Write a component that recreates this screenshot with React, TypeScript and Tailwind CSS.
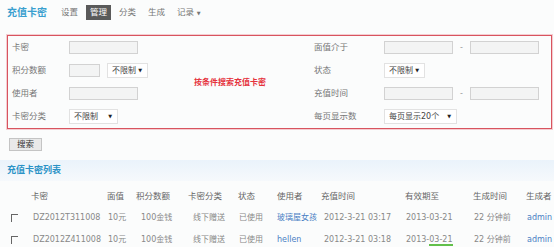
const font = 'font-["DejaVu_Sans","Noto_Sans_CJK_SC",sans-serif]';

const Input = ({ w = 'w-[69px]' }: { w?: string }) => (
  <div className={`${w} h-[13px] border border-[#d2d2d2] bg-[#f3f4f4]`} />
);

const Select = ({ label, w }: { label: string; w: string }) => (
  <div className={`${w} flex h-[15px] items-center justify-between whitespace-nowrap border border-[#e2e2e2] bg-white pl-[4px] pr-[5px] text-[8px] text-[#444]`}>
    <span>{label}</span>
    <span className="text-[5px] text-[#222]">▼</span>
  </div>
);

const Row = ({ label, lw, children }: { label: string; lw: string; children?: React.ReactNode }) => (
  <div className="flex h-[23px] items-center">
    <span className={`${lw} shrink-0 text-[8.5px] text-[#777]`}>{label}</span>
    {children}
  </div>
);

const Check = () => (
  <div className="h-[8px] w-[7px] border-t-[1.5px] border-l-[1.5px] border-[#666]" />
);

const cols =
  'grid grid-cols-[22px_76px_29px_52px_50px_39px_44px_84px_68px_53px_1fr] items-center pl-[9px] h-[22px] whitespace-nowrap';

const rows = [
  {
    code: 'DZ2012T311008',
    user: '玻璃屋女孩',
    time: '2012-3-21 03:17',
    exp: <span>2013-03-21</span>,
  },
  {
    code: 'DZ2012Z411008',
    user: 'hellen',
    time: '2012-3-21 03:18',
    exp: (
      <span>
        2013-<span className="border-b-2 border-[#62c04a]">03-21</span>
      </span>
    ),
  },
];

export default function App() {
  return (
    <div className={`h-[247px] w-[554px] overflow-hidden bg-[#fbfcfc] ${font}`}>
      {/* top nav */}
      <div className="flex h-[24px] items-center pl-[7px] pt-[1px]">
        <span className="text-[10px] font-bold text-[#3a9fcf]">充值卡密</span>
        <nav className="ml-[14px] flex items-center text-[8.5px] text-[#777]">
          <span>设置</span>
          <span className="ml-[8px] bg-[#5a5a5a] px-[4px] py-[1px] text-white">管理</span>
          <span className="ml-[8px]">分类</span>
          <span className="ml-[12px]">生成</span>
          <span className="ml-[12px]">记录 <span className="text-[5px]">▼</span></span>
        </nav>
      </div>

      {/* search conditions */}
      <div className="ml-[7px] mt-[11px] flex w-[545px] border border-[#d8545f] shadow-[0_0_0_1px_#f4cdd1]">
        <div className="w-[177px] pl-[4px]">
          <Row label="卡密" lw="w-[57px]">
            <Input />
          </Row>
          <Row label="积分数额" lw="w-[57px]">
            <Input w="w-[31px]" />
            <div className="ml-[7px]">
              <Select label="不限制" w="w-[41px]" />
            </div>
          </Row>
          <Row label="使用者" lw="w-[57px]">
            <Input />
          </Row>
          <Row label="卡密分类" lw="w-[57px]">
            <Select label="不限制" w="w-[49px]" />
          </Row>
        </div>
        <div className="flex w-[125px] items-center pl-[9px] pt-[1px]">
          <span className="text-[8px] font-bold text-[#e5323c]">按条件搜索充值卡密</span>
        </div>
        <div className="flex-1 pl-[4px]">
          <Row label="面值介于" lw="w-[70px]">
            <Input />
            <span className="mx-[7px] text-[8px] text-[#999]">-</span>
            <Input />
          </Row>
          <Row label="状态" lw="w-[70px]">
            <Select label="不限制" w="w-[41px]" />
          </Row>
          <Row label="充值时间" lw="w-[70px]">
            <Input />
            <span className="mx-[7px] text-[8px] text-[#999]">-</span>
            <Input />
          </Row>
          <Row label="每页显示数" lw="w-[70px]">
            <Select label="每页显示20个" w="w-[73px]" />
          </Row>
        </div>
      </div>

      <button className="ml-[9px] mt-[9px] flex h-[13px] w-[33px] items-center justify-center border border-[#c4c4c4] bg-[#e9e9e9] text-[8.5px] text-[#333]">
        搜索
      </button>

      {/* list header */}
      <div className="mt-[9px] flex h-[21px] items-center bg-gradient-to-b from-[#eaf3fb] to-[#f6f9fc] pl-[7px]">
        <span className="text-[9px] font-bold text-[#2a92c6]">充值卡密列表</span>
      </div>

      {/* table */}
      <div className="mt-[4px] text-[8px] text-[#888]">
        <div className={`${cols} text-[8.5px] text-[#666]`}>
          <span />
          <span>卡密</span>
          <span>面值</span>
          <span>积分数额</span>
          <span>卡密分类</span>
          <span>状态</span>
          <span>使用者</span>
          <span>充值时间</span>
          <span>有效期至</span>
          <span>生成时间</span>
          <span>生成者</span>
        </div>
        {rows.map((r) => (
          <div key={r.code} className={cols}>
            <span className="pl-[2px]">
              <Check />
            </span>
            <span className="pl-[2px]">{r.code}</span>
            <span className="pl-[1px]">10元</span>
            <span className="pl-[5px]">100金钱</span>
            <span className="pl-[5px]">线下赠送</span>
            <span className="pl-[1px]">已使用</span>
            <span className="text-[#4a80c4]">{r.user}</span>
            <span className="pl-[3px]">{r.time}</span>
            <span className="pl-[1px]">{r.exp}</span>
            <span className="pl-[1px]">22 分钟前</span>
            <span className="pl-[1px] text-[#4a80c4]">admin</span>
          </div>
        ))}
      </div>
    </div>
  );
}
